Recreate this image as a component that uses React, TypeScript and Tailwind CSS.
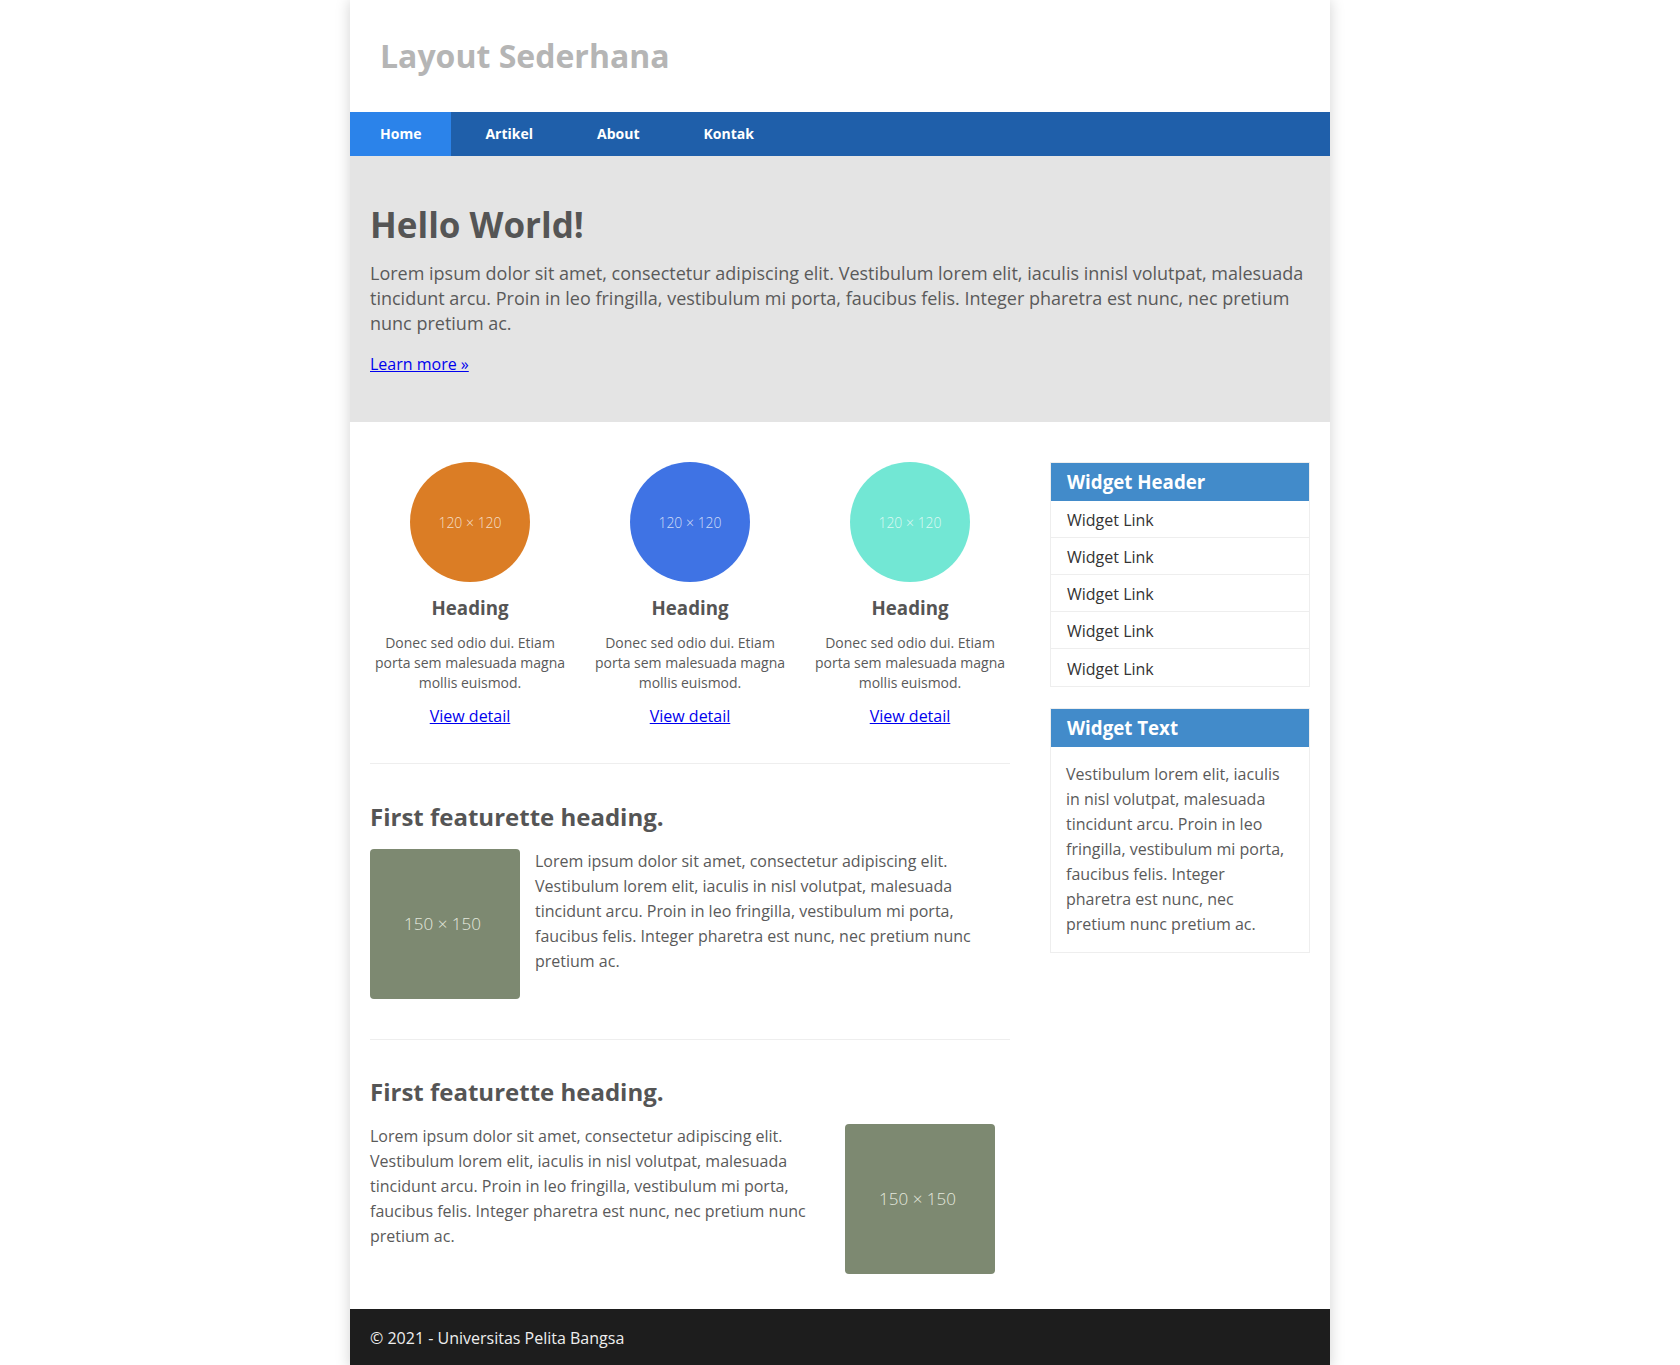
import React from "react";

const boxes = [
  { color: "bg-[#db7d25]" },
  { color: "bg-[#3f73e4]" },
  { color: "bg-[#72e7d4]" },
];

const featText =
  "Lorem ipsum dolor sit amet, consectetur adipiscing elit. Vestibulum lorem elit, iaculis in nisl volutpat, malesuada tincidunt arcu. Proin in leo fringilla, vestibulum mi porta, faucibus felis. Integer pharetra est nunc, nec pretium nunc pretium ac.";

function Placeholder() {
  return (
    <div className="flex h-[150px] w-[150px] shrink-0 items-center justify-center rounded-[4px] bg-[#7d8971] pr-[5px] text-[17px] font-light text-[#e4e8de]">
      150 × 150
    </div>
  );
}

export default function App() {
  return (
    <div className="min-h-screen bg-white font-['Open_Sans',sans-serif] text-[#5a5a5a]">
      <div className="mx-auto w-[980px] bg-white shadow-[0_0_14px_rgba(0,0,0,0.18)]">
        <header className="flex h-[112px] items-center px-[30px]">
          <h1 className="text-[32px] font-bold leading-[44px] text-[#b5b5b5]">Layout Sederhana</h1>
        </header>
        <nav className="flex h-[44px] gap-[4px] bg-[#1f5faa] text-[14px] font-bold text-white">
          <a className="flex items-center bg-[#2b83ea] px-[30px] pb-[1px]">Home</a>
          <a className="flex items-center px-[30px] pb-[1px]">Artikel</a>
          <a className="flex items-center px-[30px] pb-[1px]">About</a>
          <a className="flex items-center px-[30px] pb-[1px]">Kontak</a>
        </nav>
        <section className="flex flex-col bg-[#e4e4e4] px-[20px] pt-[50px] pb-[47px]">
          <h1 className="text-[35px] font-bold leading-[38px] text-[#555555]">Hello World!</h1>
          <p className="mt-[17px] text-[18px] leading-[25px]">
            Lorem ipsum dolor sit amet, consectetur adipiscing elit. Vestibulum lorem elit, iaculis innisl volutpat, malesuada tincidunt arcu. Proin in leo fringilla, vestibulum mi porta, faucibus felis. Integer pharetra est nunc, nec pretium nunc pretium ac.
          </p>
          <p className="mt-[17px] text-[16px] leading-[22px]">
            <a className="text-[#0000ee] underline">Learn more »</a>
          </p>
        </section>
        <div className="flex">
          <main className="w-[680px] px-[20px] pt-[40px] pb-[35px]">
            <div className="flex gap-[20px]">
              {boxes.map((b, i) => (
                <div key={i} className="flex w-[200px] flex-col items-center text-center">
                  <div className={`flex h-[120px] w-[120px] items-center justify-center rounded-full ${b.color} text-[14px] font-light text-white/75`}>
                    120 × 120
                  </div>
                  <h3 className="mt-[13px] text-[18.72px] font-bold leading-[25px] text-[#555555]">Heading</h3>
                  <p className="mt-[13px] text-[14px] leading-[20px]">
                    Donec sed odio dui. Etiam porta sem malesuada magna mollis euismod.
                  </p>
                  <a className="mt-[12px] text-[16px] leading-[22px] text-[#0000ee] underline">View detail</a>
                </div>
              ))}
            </div>
            <hr className="mt-[36px] border-0 border-t border-[#eeeeee]" />
            <h2 className="mt-[37px] text-[24px] font-bold leading-[32px] text-[#555555]">First featurette heading.</h2>
            <div className="mt-[16px] flex items-start">
              <Placeholder />
              <p className="ml-[15px] text-[16px] leading-[25px]">{featText}</p>
            </div>
            <hr className="mt-[40px] border-0 border-t border-[#eeeeee]" />
            <h2 className="mt-[36px] text-[24px] font-bold leading-[32px] text-[#555555]">First featurette heading.</h2>
            <div className="mt-[16px] flex items-start justify-between">
              <p className="w-[445px] text-[16px] leading-[25px]">{featText}</p>
              <div className="mr-[15px]">
                <Placeholder />
              </div>
            </div>
          </main>
          <aside className="w-[300px] px-[20px] pt-[40px]">
            <div className="border border-[#eeeeee]">
              <div className="flex h-[38px] items-center bg-[#428bca] px-[16px] text-[18.72px] font-bold text-white">
                Widget Header
              </div>
              <ul>
                {[0, 1, 2, 3, 4].map((i) => (
                  <li key={i} className="flex h-[37px] items-center border-b border-[#eeeeee] px-[16px] pt-[2px] text-[16px] text-[#333333] last:border-b-0">
                    Widget Link
                  </li>
                ))}
              </ul>
            </div>
            <div className="mt-[21px] border border-[#eeeeee]">
              <div className="flex h-[38px] items-center bg-[#428bca] px-[16px] text-[18.72px] font-bold text-white">
                Widget Text
              </div>
              <p className="p-[15px] text-[16px] leading-[25px]">
                Vestibulum lorem elit, iaculis in nisl volutpat, malesuada tincidunt arcu. Proin in leo fringilla, vestibulum mi porta, faucibus felis. Integer pharetra est nunc, nec pretium nunc pretium ac.
              </p>
            </div>
          </aside>
        </div>
        <footer className="bg-[#1d1d1d] px-[20px] pt-[18px] pb-[20px] text-[16px] leading-[22px] text-[#eeeeee]">
          © 2021 - Universitas Pelita Bangsa
        </footer>
      </div>
    </div>
  );
}
